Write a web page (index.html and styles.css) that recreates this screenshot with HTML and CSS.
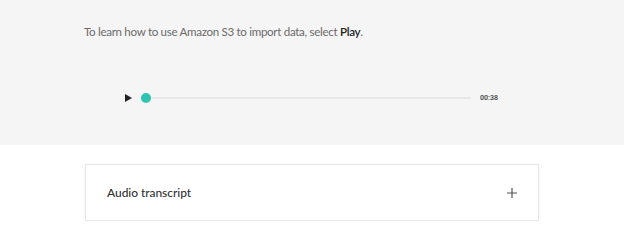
FILE: index.html
```html
<!DOCTYPE html>
<html>
<head>
<meta charset="utf-8">
<link rel="stylesheet" href="styles.css">
</head>
<body>
<section class="hero">
  <p class="intro">To learn how to use Amazon S3 to import data, select <strong>Play</strong>.</p>
  <div class="player">
    <svg class="play" width="7" height="8" viewBox="0 0 7 8"><path d="M0 0 L7 4 L0 8 Z" fill="#222"/></svg>
    <div class="track"><span class="thumb"></span></div>
    <span class="time">00:38</span>
  </div>
</section>
<div class="card">
  <span class="card-title">Audio transcript</span>
  <svg class="plus" width="10" height="10" viewBox="0 0 10 10"><path d="M5 0 V10 M0 5 H10" stroke="#555" stroke-width="1.2"/></svg>
</div>
</body>
</html>
```
FILE: styles.css
```css
html, body { margin: 0; padding: 0; background: #fff; }
body { font-family: "Lato", "Liberation Sans", sans-serif; }
.hero {
  background: #f5f5f5;
  height: 145px;
  box-sizing: border-box;
  padding: 23px 0 0 84px;
}
.intro {
  margin: 0;
  font-size: 11.6px;
  letter-spacing: -0.32px;
  line-height: 17px;
  color: #6b6b6b;
}
.intro strong { color: #222; font-weight: 600; }
.player {
  display: flex;
  align-items: center;
  margin-top: 52px;
  margin-left: 41px;
  height: 12px;
}
.play { display: block; }
.track {
  position: relative;
  margin-left: 14px;
  width: 325px;
  height: 2px;
  background: #e8e8e8;
}
.thumb {
  position: absolute;
  left: -5px;
  top: -4px;
  width: 10px;
  height: 10px;
  border-radius: 50%;
  background: #2fc4b2;
}
.time {
  margin-left: 9px;
  font-size: 7px;
  font-weight: 600;
  color: #444;
  font-family: "Roboto", "Liberation Sans", sans-serif;
}
.card {
  margin: 19px 0 0 85px;
  width: 454px;
  height: 57px;
  box-sizing: border-box;
  border: 1px solid #e8e8e8;
  box-shadow: 0 1px 3px rgba(0,0,0,0.07);
  display: flex;
  align-items: center;
  justify-content: space-between;
  padding: 0 21px 0 21px;
}
.card-title {
  font-size: 12px;
  letter-spacing: -0.05px;
  color: #333;
  font-weight: 500;
}
.plus { display: block; }
```
